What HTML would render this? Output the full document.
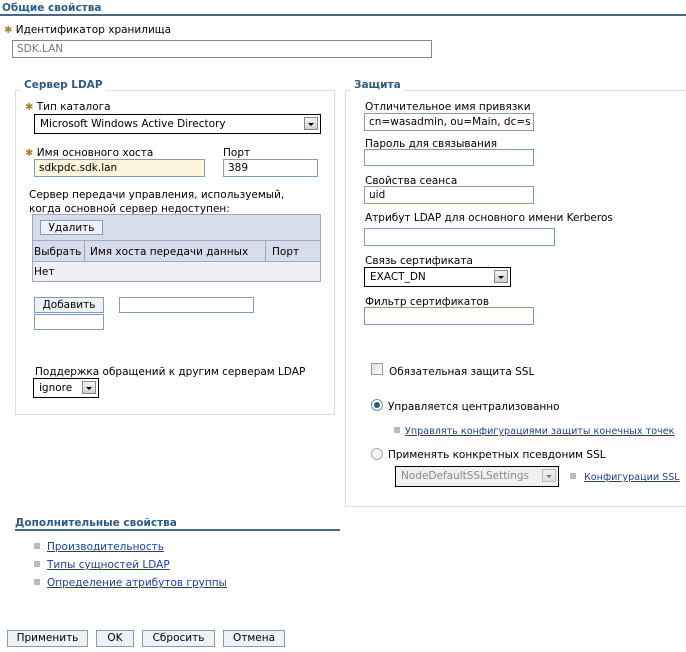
<!DOCTYPE html>
<html><head><meta charset="utf-8"><style>
body{margin:0;width:686px;height:652px;background:#fff;position:relative;overflow:hidden;font-family:"DejaVu Sans","Liberation Sans",sans-serif;font-size:10.5px;color:#000}
.a{position:absolute;white-space:nowrap;line-height:14px}
.h{font-weight:bold;color:#2b5b86}
.in{position:absolute;border:1px solid #7f9db9;background:#fff;box-sizing:border-box;padding:1px 4px;white-space:nowrap;overflow:hidden;line-height:15px}
.sel{position:absolute;border:1px solid #000;background:#fff;box-sizing:border-box;padding:2px 5px;white-space:nowrap;line-height:14px}
.arr{position:absolute;right:2px;top:2px;width:14px;height:13px;border:1px solid #888;background:linear-gradient(#f4f4f4,#cfcfcf);box-sizing:border-box}
.arr:after{content:"";position:absolute;left:3px;top:5px;border-left:3px solid transparent;border-right:3px solid transparent;border-top:3px solid #000}
.btn{position:absolute;border:1px solid #7f9db9;background:#eef2f7;box-sizing:border-box;text-align:center;line-height:15px}
.fs{position:absolute;border:1px solid #dcdcdc;box-sizing:border-box}
.star{color:#a08a20;font-size:10px}
.bul{position:absolute;width:6px;height:6px;background:#bbb}
a{color:#1a3ea8;text-decoration:underline}
.sm{font-size:9.6px}
</style></head><body>
<div class="a h" style="left:2px;top:1px">Общие свойства</div>
<div class="a" style="left:0;top:14px;width:686px;height:2px;background:#3b6a94"></div>
<div class="a" style="left:4px;top:23px"><span class="star">✱</span> Идентификатор хранилища</div>
<div class="in" style="left:12px;top:40px;width:420px;height:18px;color:#777;border-color:#888">SDK.LAN</div>

<div class="fs" style="left:15px;top:90px;width:320px;height:325px"></div>
<div class="a h" style="left:21px;top:78px;background:#fff;padding:0 3px">Сервер LDAP</div>
<div class="fs" style="left:345px;top:90px;width:345px;height:417px"></div>
<div class="a h" style="left:351px;top:78px;background:#fff;padding:0 3px">Защита</div>

<div class="a" style="left:25px;top:100px"><span class="star">✱</span> Тип каталога</div>
<div class="sel" style="left:34px;top:114px;width:287px;height:20px">Microsoft Windows Active Directory<div class="arr"></div></div>
<div class="a" style="left:25px;top:146px"><span class="star">✱</span> Имя основного хоста</div>
<div class="a" style="left:223px;top:146px">Порт</div>
<div class="in" style="left:34px;top:159px;width:171px;height:18px;background:#fdf5dc">sdkpdc.sdk.lan</div>
<div class="in" style="left:223px;top:159px;width:95px;height:18px">389</div>
<div class="a" style="left:29px;top:188px;line-height:14px">Сервер передачи управления, используемый,<br>когда основной сервер недоступен:</div>
<div class="a" style="left:32px;top:214px;width:289px;height:68px;border:1px solid #9aaac4;box-sizing:border-box;background:#f0f0f4"></div>
<div class="a" style="left:33px;top:215px;width:287px;height:25px;background:#d6dcea"></div>
<div class="btn" style="left:40px;top:220px;width:63px;height:15px">Удалить</div>
<div class="a" style="left:33px;top:240px;width:287px;height:22px;background:#d6dcea;border-top:1px solid #9aaac4;border-bottom:1px solid #9aaac4;box-sizing:border-box"></div>
<div class="a" style="left:84px;top:241px;width:1px;height:20px;background:#9aaac4"></div>
<div class="a" style="left:265px;top:241px;width:1px;height:20px;background:#9aaac4"></div>
<div class="a" style="left:34px;top:245px">Выбрать</div>
<div class="a" style="left:90px;top:245px">Имя хоста передачи данных</div>
<div class="a" style="left:272px;top:245px">Порт</div>
<div class="a" style="left:34px;top:265px">Нет</div>
<div class="btn" style="left:34px;top:297px;width:70px;height:16px">Добавить</div>
<div class="in" style="left:119px;top:297px;width:135px;height:16px"></div>
<div class="in" style="left:34px;top:314px;width:70px;height:16px"></div>
<div class="a" style="left:35px;top:365px">Поддержка обращений к другим серверам LDAP</div>
<div class="sel" style="left:33px;top:378px;width:66px;height:20px">ignore<div class="arr"></div></div>

<div class="a" style="left:365px;top:100px">Отличительное имя привязки</div>
<div class="in" style="left:364px;top:113px;width:170px;height:18px">cn=wasadmin, ou=Main, dc=s</div>
<div class="a" style="left:365px;top:137px">Пароль для связывания</div>
<div class="in" style="left:364px;top:149px;width:170px;height:17px"></div>
<div class="a" style="left:365px;top:174px">Свойства сеанса</div>
<div class="in" style="left:364px;top:186px;width:170px;height:18px">uid</div>
<div class="a" style="left:365px;top:211px">Атрибут LDAP для основного имени Kerberos</div>
<div class="in" style="left:364px;top:228px;width:191px;height:18px"></div>
<div class="a" style="left:365px;top:254px">Связь сертификата</div>
<div class="sel" style="left:364px;top:267px;width:147px;height:20px">EXACT_DN<div class="arr"></div></div>
<div class="a" style="left:365px;top:295px">Фильтр сертификатов</div>
<div class="in" style="left:364px;top:307px;width:170px;height:18px"></div>
<div class="a" style="left:371px;top:363px;width:12px;height:12px;border:1px solid #999;background:linear-gradient(135deg,#ddd,#fff);box-sizing:border-box"></div>
<div class="a" style="left:389px;top:365px">Обязательная защита SSL</div>
<div class="a" style="left:371px;top:399px;width:12px;height:12px;border-radius:50%;border:1px solid #789;background:#fff;box-sizing:border-box"><div style="position:absolute;left:2px;top:2px;width:6px;height:6px;border-radius:50%;background:#1d5d8f"></div></div>
<div class="a" style="left:388px;top:400px">Управляется централизованно</div>
<div class="bul" style="left:394px;top:427px"></div>
<div class="a sm" style="left:405px;top:425px"><a>Управлять конфигурациями защиты конечных точек</a></div>
<div class="a" style="left:371px;top:448px;width:12px;height:12px;border-radius:50%;border:1px solid #aaa;background:#f4f4f4;box-sizing:border-box"></div>
<div class="a" style="left:388px;top:448px">Применять конкретных псевдоним SSL</div>
<div class="sel" style="left:395px;top:466px;width:164px;height:21px;background:#f0f0f0;color:#888">NodeDefaultSSLSettings<div class="arr" style="opacity:.5"></div></div>
<div class="bul" style="left:570px;top:473px"></div>
<div class="a sm" style="left:584px;top:471px"><a>Конфигурации SSL</a></div>

<div class="a h" style="left:15px;top:516px">Дополнительные свойства</div>
<div class="a" style="left:15px;top:529px;width:325px;height:2px;background:#3b6a94"></div>
<div class="bul" style="left:34px;top:543px"></div>
<div class="a" style="left:47px;top:540px"><a>Производительность</a></div>
<div class="bul" style="left:34px;top:561px"></div>
<div class="a" style="left:47px;top:558px"><a>Типы сущностей LDAP</a></div>
<div class="bul" style="left:34px;top:579px"></div>
<div class="a" style="left:47px;top:576px"><a>Определение атрибутов группы</a></div>

<div class="btn" style="left:7px;top:630px;width:81px;height:17px">Применить</div>
<div class="btn" style="left:96px;top:630px;width:38px;height:17px">OK</div>
<div class="btn" style="left:142px;top:630px;width:73px;height:17px">Сбросить</div>
<div class="btn" style="left:223px;top:630px;width:62px;height:17px">Отмена</div>
</body></html>
